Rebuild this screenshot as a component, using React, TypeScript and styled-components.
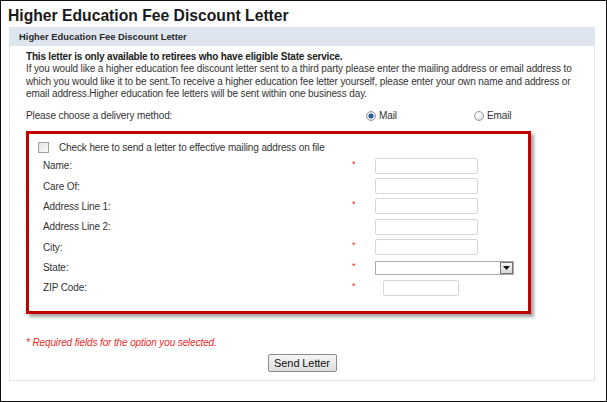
import React from "react";
import styled, { createGlobalStyle } from "styled-components";

const Global = createGlobalStyle`
  html, body { margin: 0; padding: 0; background: #fff; }
  body { font-family: "Liberation Sans", Arial, sans-serif; }
  * { box-sizing: border-box; }
`;

const Frame = styled.div`
  width: 607px;
  height: 402px;
  border: 1px solid #111;
  padding: 4px 0 0 7px;
  background: #fff;
  overflow: hidden;
`;

const Title = styled.h1`
  margin: 0;
  font-size: 15.7px;
  line-height: 21px;
  font-weight: bold;
  color: #1a1a1a;
`;

const Panel = styled.section`
  margin: 1px 0 0 1px;
  width: 586px;
  border: 1px solid #dfe5ee;
`;

const PanelHeader = styled.div`
  height: 18px;
  background: #dee5ef;
  padding-left: 9px;
  font-size: 9.4px;
  font-weight: bold;
  line-height: 18px;
  color: #2b2b2b;
`;

const PanelBody = styled.div`
  padding: 5px 16px 8px 16px;
  font-size: 10px;
  letter-spacing: -0.12px;
  color: #333;
  white-space: nowrap;
`;

const Intro = styled.p`
  margin: 0;
  line-height: 12.4px;
`;

const Lead = styled.strong`
  color: #222;
  letter-spacing: -0.2px;
`;

const DeliveryRow = styled.div`
  display: grid;
  grid-template-columns: 340px 108px auto;
  align-items: center;
  margin-top: 8px;
  height: 14px;
`;

const RadioLabel = styled.label`
  display: flex;
  align-items: center;
  gap: 3px;
`;

const Radio = styled.span<{ $checked?: boolean }>`
  width: 10px;
  height: 10px;
  border-radius: 50%;
  border: 1px solid #9a9a9a;
  background: ${(p) =>
    p.$checked
      ? "radial-gradient(circle at 50% 50%, #2a6fb5 0, #1b5796 2.2px, #e9e9e9 2.8px, #dcdcdc 100%)"
      : "radial-gradient(circle at 40% 35%, #ffffff 0, #e6e6e6 60%, #cfcfcf 100%)"};
`;

const RedBox = styled.div`
  margin-top: 8px;
  width: 505px;
  border: 3px solid #c20000;
  box-shadow: 3px 3px 3px rgba(90, 90, 90, 0.55);
  padding: 8px 0 15px 9px;
`;

const CheckRow = styled.label`
  display: flex;
  align-items: center;
  gap: 10px;
  height: 12px;
  color: #333;
`;

const CheckBox = styled.span`
  width: 11px;
  height: 11px;
  border: 1px solid #a0a0a0;
  background: linear-gradient(135deg, #e4e4e4, #f8f8f8);
`;

const FormGrid = styled.div`
  display: grid;
  grid-template-columns: 309px 23px auto;
  grid-auto-rows: 16px;
  row-gap: 4.4px;
  align-items: center;
  padding-left: 5px;
  margin-top: 4px;
`;

const Label = styled.span`
  color: #333;
`;

const Star = styled.span`
  color: #ee2a2a;
  font-size: 9px;
  line-height: 9px;
  align-self: center;
  margin-top: -3px;
`;

const TextBox = styled.span<{ $w?: number; $offset?: number }>`
  display: block;
  width: ${(p) => p.$w ?? 103}px;
  margin-left: ${(p) => p.$offset ?? 0}px;
  height: 16px;
  border: 1px solid #d4d8de;
  border-radius: 2px;
  background: #fff;
`;

const Select = styled.span`
  display: flex;
  justify-content: flex-end;
  width: 139px;
  height: 14px;
  border: 1px solid #a9a9a9;
  background: #fff;
`;

const SelectButton = styled.span`
  width: 13px;
  height: 12px;
  border: 1px solid #777;
  background: linear-gradient(#f4f4f4, #d8d8d8);
  display: flex;
  align-items: center;
  justify-content: center;
`;

const Note = styled.p`
  margin: 23px 0 0 0;
  color: #ee2a2a;
  font-style: italic;
  font-size: 10px;
  line-height: 12px;
`;

const Actions = styled.div`
  display: flex;
  justify-content: center;
  margin-top: 5px;
`;

const Button = styled.button`
  font-family: "Liberation Sans", Arial, sans-serif;
  font-size: 11px;
  letter-spacing: -0.1px;
  color: #111;
  width: 69px;
  height: 18px;
  padding: 0;
  border: 1px solid #8a8a8a;
  border-radius: 2px;
  background: linear-gradient(#f6f6f6, #dedede);
`;

const fields: { label: string; req: boolean; kind: "text" | "select" | "zip" }[] = [
  { label: "Name:", req: true, kind: "text" },
  { label: "Care Of:", req: false, kind: "text" },
  { label: "Address Line 1:", req: true, kind: "text" },
  { label: "Address Line 2:", req: false, kind: "text" },
  { label: "City:", req: true, kind: "text" },
  { label: "State:", req: true, kind: "select" },
  { label: "ZIP Code:", req: true, kind: "zip" },
];

export default function App() {
  return (
    <>
      <Global />
      <Frame>
        <Title>Higher Education Fee Discount Letter</Title>
        <Panel>
          <PanelHeader>Higher Education Fee Discount Letter</PanelHeader>
          <PanelBody>
            <Intro>
              <Lead>This letter is only available to retirees who have eligible State service.</Lead>
              <br />
              If you would like a higher education fee discount letter sent to a third party please enter the mailing address or email address to
              <br />
              which you would like it to be sent.To receive a higher education fee letter yourself, please enter your own name and address or
              <br />
              email address.Higher education fee letters will be sent within one business day.
            </Intro>
            <DeliveryRow>
              <span>Please choose a delivery method:</span>
              <RadioLabel>
                <Radio $checked />
                Mail
              </RadioLabel>
              <RadioLabel>
                <Radio />
                Email
              </RadioLabel>
            </DeliveryRow>
            <RedBox>
              <CheckRow>
                <CheckBox />
                Check here to send a letter to effective mailing address on file
              </CheckRow>
              <FormGrid>
                {fields.map((f) => (
                  <React.Fragment key={f.label}>
                    <Label>{f.label}</Label>
                    <Star>{f.req ? "*" : ""}</Star>
                    {f.kind === "text" && <TextBox />}
                    {f.kind === "zip" && <TextBox $w={76} $offset={8} />}
                    {f.kind === "select" && (
                      <Select>
                        <SelectButton>
                          <svg width="7" height="4" viewBox="0 0 7 4">
                            <path d="M0 0h7L3.5 4z" fill="#111" />
                          </svg>
                        </SelectButton>
                      </Select>
                    )}
                  </React.Fragment>
                ))}
              </FormGrid>
            </RedBox>
            <Note>* Required fields for the option you selected.</Note>
            <Actions>
              <Button>Send Letter</Button>
            </Actions>
          </PanelBody>
        </Panel>
      </Frame>
    </>
  );
}
